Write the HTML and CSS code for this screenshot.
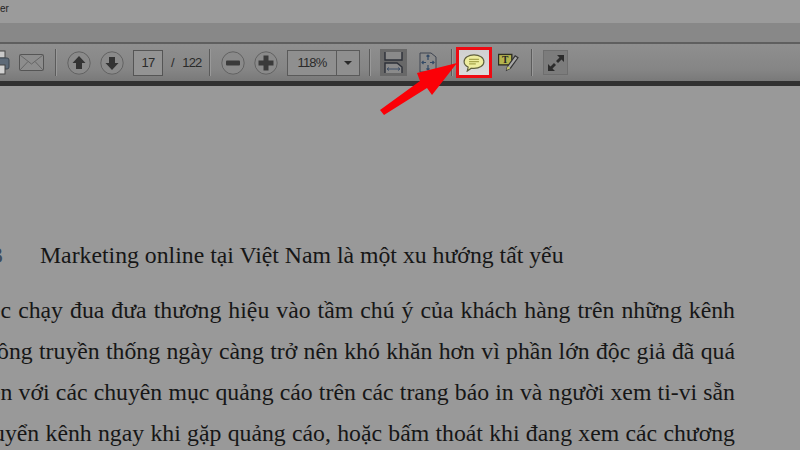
FILE: index.html

```html
<!DOCTYPE html>
<html lang="vi">
<head>
<meta charset="utf-8"/>
<title>PDF Reader</title>
<link rel="stylesheet" href="styles.css">
</head>
<body>
<div class="titlebar"><span class="title-text">er</span></div>
<div class="menubar"></div>

<div class="toolbar">
  <svg class="icon print" viewBox="0 0 22 26">
    <rect x="5" y="1" width="12" height="7" fill="#c9c9c9" stroke="#444"/>
    <rect x="1" y="8" width="20" height="11" rx="2" fill="#5d6a78" stroke="#3d4650"/>
    <rect x="5" y="15" width="12" height="9" fill="#d2d2d2" stroke="#444"/>
  </svg>
  <svg class="icon mail g9" viewBox="0 0 25 17">
    <rect x="0.5" y="0.5" width="24" height="16" rx="1" fill="#8d8d8d" stroke="#555"/>
    <path d="M1 1 12.5 10 24 1M1 16 9 7.5M24 16 16 7.5" fill="none" stroke="#666"/>
  </svg>
  <div class="sep g11"></div>
  <svg class="icon round g10" viewBox="0 0 24 24">
    <circle cx="12" cy="12" r="11.2" fill="#8a8a8a" stroke="#626262"/>
    <path d="M12 5 18.5 12H15V18H9V12H5.5Z" fill="#333"/>
  </svg>
  <svg class="icon round g9" viewBox="0 0 24 24">
    <circle cx="12" cy="12" r="11.2" fill="#8a8a8a" stroke="#626262"/>
    <path d="M12 19 18.5 12H15V6H9V12H5.5Z" fill="#333"/>
  </svg>
  <div class="page-box g9">17</div>
  <span class="page-total">/&nbsp;&nbsp;&nbsp;122</span>
  <div class="sep g8"></div>
  <svg class="icon round g10" viewBox="0 0 24 24">
    <circle cx="12" cy="12" r="11.2" fill="#8a8a8a" stroke="#626262"/>
    <rect x="5" y="9.5" width="14" height="5" rx="1" fill="#3a3a3a"/>
  </svg>
  <svg class="icon round g9" viewBox="0 0 24 24">
    <circle cx="12" cy="12" r="11.2" fill="#8a8a8a" stroke="#626262"/>
    <path d="M9.5 4.5H14.5V9.5H19.5V14.5H14.5V19.5H9.5V14.5H4.5V9.5H9.5Z" fill="#3a3a3a"/>
  </svg>
  <div class="zoom-box g9">
    <span class="zoom-value">118%</span>
    <span class="zoom-arrow"></span>
  </div>
  <div class="sep g9"></div>
  <svg class="icon save g9" viewBox="0 0 27 27">
    <rect width="27" height="27" fill="#686868"/>
    <path d="M5 3V11H22V3M5 24V14H17L22 18V24" fill="#8a8a8a" stroke="#2d3038" stroke-width="1.4"/>
    <path d="M7 20H20M7 20 9 18.5M7 20 9 21.5M20 20 18 18.5M20 20 18 21.5" fill="none" stroke="#3f5068"/>
  </svg>
  <svg class="icon fit g12" viewBox="0 0 18 21">
    <path d="M1 1H12L17 5V20H1Z" fill="#8b8b8b" stroke="#3e4450"/>
    <path d="M9 3V8M9 13V18M3 10.500H7M11 10.500H15M7.500 4.500 9 3 10.500 4.500M7.500 16.500 9 18 10.500 16.500M4.500 9 3 10.500 4.500 12M13.500 9 15 10.500 13.500 12" fill="none" stroke="#334a66" stroke-width="1.200"/>
  </svg>
  <div class="sep g14"></div>
  <div class="comment-btn g3">
    <svg class="bubble" viewBox="0 0 24 20">
      <path d="M12 1C18 1 23 3.800 23 8.500S18 16 12 16C11 16 10 16 9 15.800L4.500 19 5.500 14.500C2.500 13 1 11 1 8.500 1 3.800 6 1 12 1Z" fill="#eeed9f" stroke="#5f5f3e" stroke-width="1.300"/>
      <path d="M6.500 6H17.500M6.500 8.500H17.500M6.500 11H14" stroke="#a8a64e" stroke-width="1.200"/>
    </svg>
  </div>
  <svg class="icon note g6" viewBox="0 0 22 20">
    <rect x="0.500" y="1.500" width="14" height="11" fill="#b4b34e" stroke="#2e2e20" stroke-width="1.400"/>
    <text class="note-t" x="7.500" y="11">T</text>
    <path d="M9 18 10 14 18 3 21 5 13 16Z" fill="#a8a8a8" stroke="#333" stroke-width="1.200"/>
    <path d="M9 18 10 14 13 16Z" fill="#c9c86a"/>
  </svg>
  <div class="sep g12"></div>
  <div class="full-btn g10">
    <svg class="full-icon" viewBox="0 0 18 18">
      <path d="M10 1H17V8L14.500 5.500 11 9 9 7 12.500 3.500ZM8 17H1V10L3.500 12.500 7 9 9 11 5.500 14.500Z" fill="#2c2c2c"/>
    </svg>
  </div>
</div>
<div class="toolbar-shadow"></div>

<div class="page">
  <div class="heading">
    <span class="heading-num">3</span>
    <span>Marketing online tại Việt Nam là một xu hướng tất yếu</span>
  </div>
  <div class="line l1"><span>Việc chạy đua đưa thương hiệu vào tầm chú ý của khách hàng trên những kênh</span></div>
  <div class="line l2"><span>thông truyền thống ngày càng trở nên khó khăn hơn vì phần lớn độc giả đã quá</span></div>
  <div class="line l3"><span>quen với các chuyên mục quảng cáo trên các trang báo in và người xem ti-vi sẵn</span></div>
  <div class="line l4"><span>chuyển kênh ngay khi gặp quảng cáo, hoặc bấm thoát khi đang xem các chương</span></div>
</div>

<svg class="arrow" viewBox="0 0 800 450">
  <polygon points="457,63 432,95 427,88 384,115 380,110 420,81 417,73" fill="#fb0007"/>
</svg>
</body>
</html>
```

FILE: styles.css

```css
html, body {
    margin: 0;
    height: 450px;
    overflow: hidden;
}
body {
    position: relative;
    background-color: #999;
    font-family: "Liberation Serif", serif;
    color: #161616;
}

.titlebar {
    height: 23px;
    background-color: #9b9b9b;
    font-family: "Liberation Sans", sans-serif;
    font-size: 10px;
    line-height: 17px;
    color: #222;
    overflow: hidden;
}
.menubar {
    height: 19px;
    background-color: #888;
}

.toolbar {
    display: flex;
    align-items: center;
    height: 39px;
    border-top: 2px solid #5f5f5f;
    background: linear-gradient(#8f8f8f, #858585 70%, #797979);
    font-family: "Liberation Sans", sans-serif;
    color: #2a2a2a;
    overflow: hidden;
    box-sizing: border-box;
}
.toolbar-shadow {
    height: 5px;
    background-color: #313131;
}

.g3 { margin-left: 3px; }
.g6 { margin-left: 6px; }
.g8 { margin-left: 8px; }
.g9 { margin-left: 9px; }
.g10 { margin-left: 10px; }
.g11 { margin-left: 11px; }
.g12 { margin-left: 12px; }
.g14 { margin-left: 14px; }

.icon {
    display: block;
    flex: none;
}
.print { width: 22px; height: 26px; margin-left: -12px; }
.mail { width: 25px; height: 17px; }
.round { width: 24px; height: 24px; }
.save { width: 27px; height: 27px; }
.fit { width: 18px; height: 21px; }
.note { width: 21px; height: 19px; }
.note-t {
    font-family: "Liberation Serif", serif;
    font-size: 10px;
    font-weight: bold;
    text-anchor: middle;
    fill: #222;
}

.sep {
    flex: none;
    width: 1px;
    height: 27px;
    background-color: #5b5b5b;
    border-right: 1px solid #999;
}

.page-box {
    flex: none;
    width: 30px;
    height: 26px;
    box-sizing: border-box;
    border: 1px solid #555;
    background-color: #939393;
    font-size: 13px;
    letter-spacing: -0.800px;
    line-height: 24px;
    text-align: center;
}
.page-total {
    flex: none;
    width: 30px;
    margin-left: 8px;
    font-size: 13px;
    letter-spacing: -0.800px;
    white-space: nowrap;
}

.zoom-box {
    flex: none;
    display: flex;
    width: 73px;
    height: 26px;
    box-sizing: border-box;
    border: 1px solid #5a5a5a;
    background-color: #8f8f8f;
}
.zoom-value {
    width: 48px;
    border-right: 1px solid #5a5a5a;
    font-size: 13px;
    letter-spacing: -0.800px;
    line-height: 24px;
    text-align: center;
}
.zoom-arrow {
    align-self: center;
    width: 0;
    height: 0;
    margin-left: 7px;
    border-left: 4px solid transparent;
    border-right: 4px solid transparent;
    border-top: 4px solid #2a2a2a;
}

.comment-btn {
    flex: none;
    display: flex;
    align-items: center;
    justify-content: center;
    width: 36px;
    height: 31px;
    box-sizing: border-box;
    border: 3px solid #ee0a12;
    background: linear-gradient(#d0d0d0, #dcdcdc);
}
.bubble {
    width: 22px;
    height: 18px;
}

.full-btn {
    flex: none;
    display: flex;
    align-items: center;
    justify-content: center;
    width: 25px;
    height: 25px;
    box-sizing: border-box;
    border: 1px solid #6e6e6e;
    background-color: #7c7c7c;
}
.full-icon {
    width: 18px;
    height: 18px;
}

.page {
    padding-top: 155px;
    font-size: 23.750px;
}
.heading {
    display: flex;
    height: 28px;
    line-height: 28px;
    padding-left: 40px;
    position: relative;
    white-space: nowrap;
}
.heading-num {
    position: absolute;
    left: -9px;
    color: #3c4a5c;
}
.line {
    display: flex;
    justify-content: flex-end;
    width: 735px;
    height: 41px;
    line-height: 41px;
    white-space: nowrap;
}
.l1 { margin-top: 21px; word-spacing: 1.100px; }
.l2 { word-spacing: 0.400px; }
.l3 { word-spacing: 0.250px; }
.l4 { word-spacing: 0.350px; }

.arrow {
    position: absolute;
    left: 0;
    top: 0;
    width: 800px;
    height: 450px;
}
```
